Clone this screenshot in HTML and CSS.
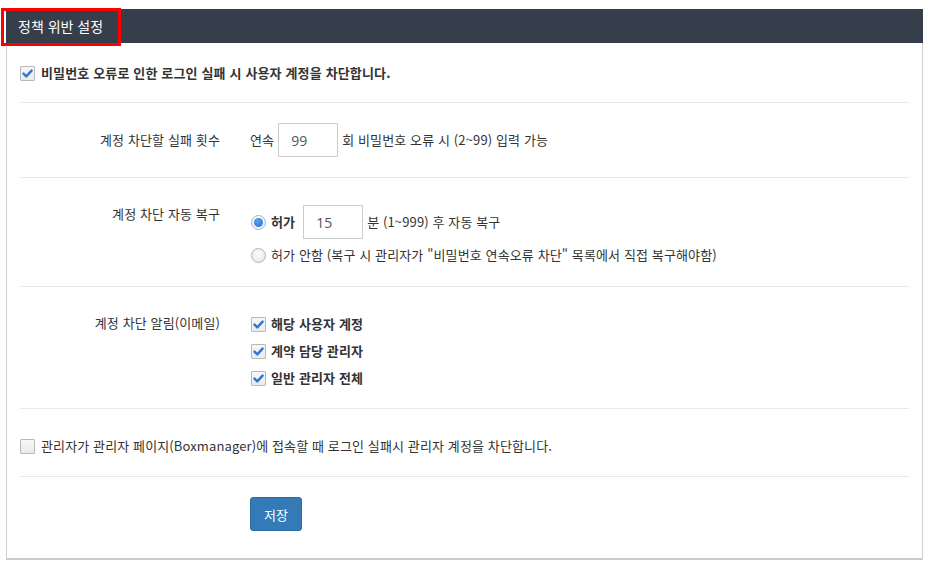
FILE: index.html
```html
<!DOCTYPE html>
<html lang="ko">
<head>
<meta charset="utf-8">
<title>정책 위반 설정</title>
<link rel="stylesheet" href="styles.css">
</head>
<body>
<div class="page">
  <div class="panel">
    <div class="panel-head"><h2 class="panel-title">정책 위반 설정</h2></div>
    <div class="panel-body">
      <div class="sec sec-top">
        <label class="chk chk-strong">
          <span class="box"><svg viewBox="0 0 15 15" width="15" height="15"><path class="tick" d="M3.5 7.6 L6.3 10.4 L11.6 4.6"/></svg></span>
          <span>비밀번호 오류로 인한 로그인 실패 시 사용자 계정을 차단합니다.</span>
        </label>
      </div>

      <div class="sec row row-count">
        <div class="lbl">계정 차단할 실패 횟수</div>
        <div class="ctl line">
          <span>연속</span>
          <input class="num" type="text" value="99">
          <span>회 비밀번호 오류 시 (2~99) 입력 가능</span>
        </div>
      </div>

      <div class="sec row row-recover">
        <div class="lbl lbl-top">계정 차단 자동 복구</div>
        <div class="ctl stack">
          <div class="line line-input">
            <span class="radio on"><span class="dot"></span></span>
            <b class="opt">허가</b>
            <input class="num num-gap" type="text" value="15">
            <span>분 (1~999) 후 자동 복구</span>
          </div>
          <div class="line line-text">
            <span class="radio"></span>
            <span class="opt">허가 안함 (복구 시 관리자가 "비밀번호 연속오류 차단" 목록에서 직접 복구해야함)</span>
          </div>
        </div>
      </div>

      <div class="sec row row-notify">
        <div class="lbl lbl-top">계정 차단 알림(이메일)</div>
        <div class="ctl checks">
          <label class="chk chk-bold">
            <span class="box"><svg viewBox="0 0 15 15" width="15" height="15"><path class="tick" d="M3.5 7.6 L6.3 10.4 L11.6 4.6"/></svg></span>
            <span>해당 사용자 계정</span>
          </label>
          <label class="chk chk-bold">
            <span class="box"><svg viewBox="0 0 15 15" width="15" height="15"><path class="tick" d="M3.5 7.6 L6.3 10.4 L11.6 4.6"/></svg></span>
            <span>계약 담당 관리자</span>
          </label>
          <label class="chk chk-bold">
            <span class="box"><svg viewBox="0 0 15 15" width="15" height="15"><path class="tick" d="M3.5 7.6 L6.3 10.4 L11.6 4.6"/></svg></span>
            <span>일반 관리자 전체</span>
          </label>
        </div>
      </div>

      <div class="sec sec-admin">
        <label class="chk">
          <span class="box"></span>
          <span>관리자가 관리자 페이지(Boxmanager)에 접속할 때 로그인 실패시 관리자 계정을 차단합니다.</span>
        </label>
      </div>

      <div class="actions">
        <button class="btn" type="button">저장</button>
      </div>
    </div>
  </div>
  <div class="annot"></div>
</div>
</body>
</html>
```
FILE: styles.css
```css
* { box-sizing: border-box; }
body {
  margin: 0;
  background: #fff;
  color: #333;
  font-family: "Noto Sans CJK KR", "Noto Sans", sans-serif;
  font-size: 13px;
  line-height: 20px;
  letter-spacing: 0.12px;
}
.page {
  position: relative;
  padding: 9px 12px 0 6px;
}
.panel {
  border: 1px solid #cfcfcf;
  border-top: 0;
  border-bottom: 2px solid #cbcbcb;
  background: #fff;
}
.panel-head {
  margin: 0 -1px;
  height: 34px;
  background: #373e4b;
  padding-left: 12px;
}
.panel-title {
  margin: 0;
  color: #fff;
  font-size: 14px;
  font-weight: normal;
  line-height: 35px;
  letter-spacing: 0;
}
.panel-body {
  padding: 0 13px;
}
.sec {
  border-bottom: 1px solid #e9e9e9;
}
.sec-top {
  padding: 20px 0 19px;
}
.row {
  display: grid;
  grid-template-columns: 200px 1fr;
  column-gap: 30px;
}
.lbl {
  text-align: right;
}
.row-count {
  padding: 20px 0;
  align-items: center;
}
.row-recover {
  padding: 27px 0 21px;
}
.lbl-top {
  margin-top: -1px;
}
.row-notify {
  padding: 27px 0 20px;
}
.sec-admin {
  padding: 27px 0 20px;
}
.line {
  display: flex;
  align-items: center;
}
.stack {
  display: flex;
  flex-direction: column;
  gap: 6px;
}
.line-input {
  height: 34px;
}
.line-text {
  height: 20px;
}
.num {
  width: 60px;
  height: 34px;
  margin: 0 4px 0 4px;
  border: 1px solid #ccc;
  padding: 0 0 0 12px;
  font-family: "Open Sans", "Noto Sans", sans-serif;
  font-size: 14px;
  color: #555;
  background: #fff;
  outline: none;
  letter-spacing: 0;
}
.num-gap {
  margin-left: 8px;
}
.opt {
  margin-left: 5px;
}
b.opt {
  font-weight: bold;
}
.checks {
  display: flex;
  flex-direction: column;
  gap: 7px;
}
.chk {
  display: flex;
  align-items: center;
  height: 20px;
}
.box {
  flex: none;
  width: 15px;
  height: 15px;
  margin-right: 6px;
  border: 1px solid #b9b9b9;
  border-radius: 1px;
  background: linear-gradient(#f7f7f7, #ebebeb);
  position: relative;
}
.box svg {
  position: absolute;
  left: -1px;
  top: -1px;
}
.tick {
  fill: none;
  stroke: #2a78d4;
  stroke-width: 2.4;
  stroke-linecap: round;
  stroke-linejoin: round;
}
.chk-strong {
  font-size: 13px;
  font-weight: bold;
  letter-spacing: 0.15px;
}
.chk-bold {
  font-weight: bold;
}
.chk-bold .box {
  margin-left: 1px;
  margin-right: 5px;
}
.radio {
  flex: none;
  width: 15px;
  height: 15px;
  margin-left: 1px;
  border: 1px solid #b4b4b4;
  border-radius: 50%;
  background: radial-gradient(circle at 50% 35%, #fbfbfb, #e4e4e4);
  display: flex;
  align-items: center;
  justify-content: center;
}
.radio.on {
  background: radial-gradient(circle at 50% 35%, #fff, #e8eef6);
  border-color: #a9b3c0;
}
.dot {
  width: 9px;
  height: 9px;
  border-radius: 50%;
  background: radial-gradient(circle at 40% 35%, #5aa2f0, #1f6fd2);
}
.actions {
  padding: 20px 0 27px 230px;
}
.btn {
  display: block;
  width: 52px;
  height: 34px;
  border: 1px solid #2e6da4;
  border-radius: 3px;
  background: #337ab7;
  color: #fff;
  font-family: "Noto Sans CJK KR", sans-serif;
  font-size: 13px;
  padding: 0;
  letter-spacing: 0;
}
.annot {
  position: absolute;
  left: 1px;
  top: 8px;
  width: 120px;
  height: 38px;
  border: 3px solid #f00;
}
```
